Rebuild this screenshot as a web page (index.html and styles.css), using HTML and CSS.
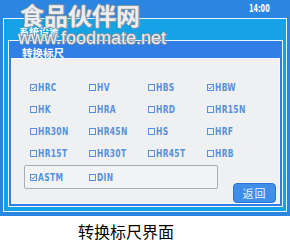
FILE: index.html
```html
<!DOCTYPE html>
<html lang="zh">
<head>
<meta charset="utf-8">
<link rel="stylesheet" href="styles.css">
</head>
<body>
<div class="screen">
  <div class="topbar"><span class="time">14:00</span></div>
  <div class="outer">
    <div class="outer-title">系统设置</div>
    <div class="inner">
      <div class="inner-title">转换标尺</div>
      <div class="content">
        <div class="grid">
          <div class="item"><svg class="cb" viewBox="0 0 7 7"><rect x="0.5" y="0.5" width="6" height="6"/><path d="M1.5 3.5 L3 5 L5.8 1.6"/></svg><span class="lbl">HRC</span></div>
          <div class="item"><svg class="cb" viewBox="0 0 7 7"><rect x="0.5" y="0.5" width="6" height="6"/></svg><span class="lbl">HV</span></div>
          <div class="item"><svg class="cb" viewBox="0 0 7 7"><rect x="0.5" y="0.5" width="6" height="6"/></svg><span class="lbl">HBS</span></div>
          <div class="item"><svg class="cb" viewBox="0 0 7 7"><rect x="0.5" y="0.5" width="6" height="6"/><path d="M1.5 3.5 L3 5 L5.8 1.6"/></svg><span class="lbl">HBW</span></div>
          <div class="item"><svg class="cb" viewBox="0 0 7 7"><rect x="0.5" y="0.5" width="6" height="6"/></svg><span class="lbl">HK</span></div>
          <div class="item"><svg class="cb" viewBox="0 0 7 7"><rect x="0.5" y="0.5" width="6" height="6"/></svg><span class="lbl">HRA</span></div>
          <div class="item"><svg class="cb" viewBox="0 0 7 7"><rect x="0.5" y="0.5" width="6" height="6"/></svg><span class="lbl">HRD</span></div>
          <div class="item"><svg class="cb" viewBox="0 0 7 7"><rect x="0.5" y="0.5" width="6" height="6"/></svg><span class="lbl">HR15N</span></div>
          <div class="item"><svg class="cb" viewBox="0 0 7 7"><rect x="0.5" y="0.5" width="6" height="6"/></svg><span class="lbl">HR30N</span></div>
          <div class="item"><svg class="cb" viewBox="0 0 7 7"><rect x="0.5" y="0.5" width="6" height="6"/></svg><span class="lbl">HR45N</span></div>
          <div class="item"><svg class="cb" viewBox="0 0 7 7"><rect x="0.5" y="0.5" width="6" height="6"/></svg><span class="lbl">HS</span></div>
          <div class="item"><svg class="cb" viewBox="0 0 7 7"><rect x="0.5" y="0.5" width="6" height="6"/></svg><span class="lbl">HRF</span></div>
          <div class="item"><svg class="cb" viewBox="0 0 7 7"><rect x="0.5" y="0.5" width="6" height="6"/></svg><span class="lbl">HR15T</span></div>
          <div class="item"><svg class="cb" viewBox="0 0 7 7"><rect x="0.5" y="0.5" width="6" height="6"/></svg><span class="lbl">HR30T</span></div>
          <div class="item"><svg class="cb" viewBox="0 0 7 7"><rect x="0.5" y="0.5" width="6" height="6"/></svg><span class="lbl">HR45T</span></div>
          <div class="item"><svg class="cb" viewBox="0 0 7 7"><rect x="0.5" y="0.5" width="6" height="6"/></svg><span class="lbl">HRB</span></div>
        </div>
        <div class="bottom-row">
          <div class="std-box">
            <div class="item"><svg class="cb" viewBox="0 0 7 7"><rect x="0.5" y="0.5" width="6" height="6"/><path d="M1.5 3.5 L3 5 L5.8 1.6"/></svg><span class="lbl">ASTM</span></div>
            <div class="item"><svg class="cb" viewBox="0 0 7 7"><rect x="0.5" y="0.5" width="6" height="6"/></svg><span class="lbl">DIN</span></div>
          </div>
          <div class="back-btn">返回</div>
        </div>
      </div>
    </div>
  </div>
  <div class="watermark">
    <div class="wm-cn">食品伙伴网</div>
    <div class="wm-en">www.foodmate.net</div>
  </div>
</div>
<div class="caption">转换标尺界面</div>
</body>
</html>
```

FILE: styles.css
```css
html, body {
  margin: 0;
  padding: 0;
  background: #ffffff;
}
body {
  width: 290px;
  height: 243px;
  overflow: hidden;
  font-family: "Noto Sans CJK SC", "Liberation Sans", sans-serif;
}
.screen {
  position: relative;
  width: 290px;
  height: 216px;
  box-sizing: border-box;
  background: #2b86e2;
  padding: 0 3px 4px 3px;
  display: flex;
  flex-direction: column;
}
.topbar {
  height: 18px;
  display: flex;
  justify-content: flex-end;
  align-items: center;
  padding-right: 17px;
}
.time {
  display: inline-block;
  color: #ffffff;
  font-family: "DejaVu Sans Condensed", sans-serif;
  font-weight: bold;
  font-size: 10px;
  line-height: 10px;
  margin-top: -1px;
  transform: scaleX(0.72);
  transform-origin: right center;
}
.outer {
  flex: 1;
  border: 1px solid #e8f6fd;
  background: #15a3e6;
  padding: 0 3px 4px 4px;
  display: flex;
  flex-direction: column;
}
.outer-title {
  height: 21px;
  box-sizing: border-box;
  padding: 7px 0 0 11px;
  color: #ffffff;
  font-size: 10px;
  line-height: 12px;
  font-weight: bold;
}
.inner {
  flex: 1;
  border: 1px solid #f0f8ff;
  background: #2f7fe6;
  padding: 0 2px 2px 2px;
  display: flex;
  flex-direction: column;
}
.inner-title {
  height: 17px;
  box-sizing: border-box;
  padding: 6px 0 0 11px;
  color: #ffffff;
  font-size: 10.5px;
  line-height: 11px;
  font-weight: bold;
}
.content {
  flex: 1;
  border: 1px solid #f4f8fc;
  background: #eef0f2;
  padding: 17px 0 0 0;
  display: flex;
  flex-direction: column;
}
.grid {
  display: grid;
  grid-template-columns: repeat(4, 59px);
  grid-auto-rows: 22px;
  padding-left: 18px;
}
.item {
  display: flex;
  align-items: center;
  color: #5592da;
  font-family: "DejaVu Sans Condensed", sans-serif;
  font-weight: bold;
  font-size: 10.5px;
  line-height: 12px;
}
.lbl {
  display: inline-block;
  transform: scaleX(0.8);
  transform-origin: left center;
  letter-spacing: 0.4px;
}
.cb {
  flex: none;
  width: 7px;
  height: 7px;
  margin-right: 1px;
  fill: none;
  stroke: #5592da;
  stroke-width: 1;
}
.bottom-row {
  display: flex;
  align-items: flex-start;
  margin-top: 1px;
}
.std-box {
  margin-left: 12px;
  width: 194px;
  height: 24px;
  box-sizing: border-box;
  border: 1px solid #a9acb0;
  border-radius: 2px;
  background: #f2f3f4;
  padding-left: 5px;
  display: grid;
  grid-template-columns: repeat(2, 59px);
}
.back-btn {
  margin-left: auto;
  margin-right: 3px;
  margin-top: 18px;
  width: 43px;
  height: 20px;
  box-sizing: border-box;
  border: 1px solid #2b74d6;
  border-radius: 4px;
  background: #3f8ee9;
  color: #eaf3ff;
  font-size: 11px;
  line-height: 18px;
  text-align: center;
  letter-spacing: 1px;
}
.watermark {
  position: absolute;
  left: 18px;
  top: 1px;
  pointer-events: none;
}
.wm-cn {
  font-family: "Noto Sans CJK SC", sans-serif;
  font-weight: bold;
  font-size: 24px;
  line-height: 28px;
  padding-left: 2px;
  color: rgba(255, 255, 255, 0.85);
  text-shadow: 1px 0 0 #8592a0, -1px 0 0 #8592a0, 0 1px 0 #8592a0, 0 -1px 0 #8592a0;
}
.wm-en {
  font-family: "Liberation Sans", Arial, sans-serif;
  font-size: 18px;
  line-height: 18px;
  color: rgba(255, 255, 255, 0.85);
  text-shadow: 1px 0 0 #8592a0, -1px 0 0 #8592a0, 0 1px 0 #8592a0, 0 -1px 0 #8592a0;
}
.caption {
  padding: 5px 0 0 78px;
  font-family: "Noto Sans CJK SC", sans-serif;
  font-size: 16px;
  line-height: 20px;
  color: #000000;
}
```
